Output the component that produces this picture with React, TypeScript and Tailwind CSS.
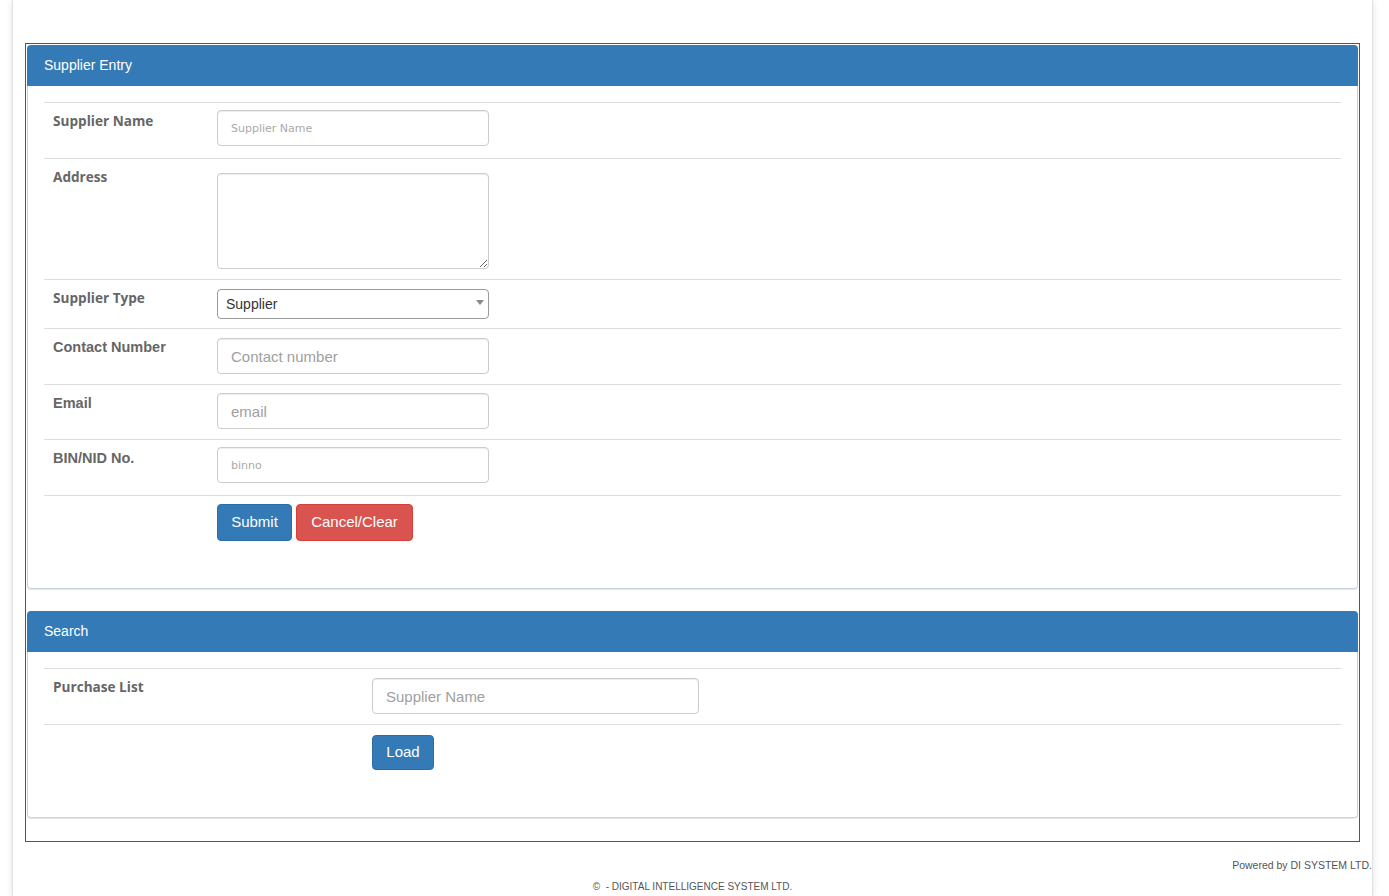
import React from "react";

const arial = { fontFamily: '"Liberation Sans", Arial, sans-serif' };

function Label({ children, variant = "open" }: { children: React.ReactNode; variant?: "open" | "arial" }) {
  return (
    <div
      className={
        variant === "open"
          ? "px-[9px] pt-[8px] text-[13.6px] leading-[20px] font-bold text-[#666] font-['Open_Sans',sans-serif]"
          : "px-[9px] pt-[8px] text-[14.5px] leading-[20px] font-bold text-[#666] font-['Liberation_Sans',Arial,sans-serif]"
      }
    >
      {children}
    </div>
  );
}

const inputBase =
  "block w-[272px] border border-[#ccc] rounded-[4px] bg-white shadow-[inset_0_1px_1px_rgba(0,0,0,0.075)] outline-none";

function Panel({ title, children }: { title: string; children: React.ReactNode }) {
  return (
    <div className="rounded-[4px] shadow-[0_1px_1px_rgba(0,0,0,0.1)]">
      <div className="h-[41px] bg-[#337ab7] rounded-t-[4px] px-[17px] flex items-center text-white text-[14px]" style={arial}>
        {title}
      </div>
      {children}
    </div>
  );
}

export default function App() {
  return (
    <div className="min-h-screen bg-white" style={arial}>
      <div className="min-h-screen ml-[12px] w-[1361px] bg-white border-x border-[#e2e2e2] shadow-[0_0_6px_rgba(0,0,0,0.12)] px-[12px] pt-[43px] pb-[2px]">
        {/* Red frame */}
        <div className="border border-[#c1272d] p-px">
          {/* Supplier Entry */}
          <Panel title="Supplier Entry">
            <div className="border-x border-b border-[#c9d1da] rounded-b-[4px] px-[16px] pt-[16px] pb-[47px]">
              <div className="grid grid-cols-[165px_1fr] border-t border-[#ddd]">
                <Label>Supplier Name</Label>
                <div className="px-[8px] pt-[7px] pb-[12px]">
                  <input
                    placeholder="Supplier Name"
                    className={`${inputBase} h-[36px] px-[13px] text-[11px] text-[#333] placeholder:text-[#aaa] font-['DejaVu_Sans',sans-serif]`}
                  />
                </div>
              </div>
              <div className="grid grid-cols-[165px_1fr] border-t border-[#ddd]">
                <Label>Address</Label>
                <div className="px-[8px] pt-[14px] pb-[10px]">
                  <textarea className={`${inputBase} h-[96px] px-[12px] py-[6px] text-[14px] resize`} style={arial} />
                </div>
              </div>
              <div className="grid grid-cols-[165px_1fr] border-t border-[#ddd]">
                <Label>Supplier Type</Label>
                <div className="px-[8px] pt-[9px] pb-[9px]">
                  <div className="relative w-[272px]">
                    <select
                      defaultValue="Supplier"
                      className="block w-[272px] h-[30px] appearance-none border border-[#9a9a9a] rounded-[4px] bg-white pl-[8px] text-[14px] text-[#333] outline-none"
                      style={arial}
                    >
                      <option>Supplier</option>
                      <option>Customer</option>
                    </select>
                    <span className="pointer-events-none absolute right-[5px] top-[11px] w-0 h-0 border-l-[4px] border-r-[4px] border-t-[5px] border-l-transparent border-r-transparent border-t-[#888]" />
                  </div>
                </div>
              </div>
              <div className="grid grid-cols-[165px_1fr] border-t border-[#ddd]">
                <Label variant="arial">Contact Number</Label>
                <div className="px-[8px] pt-[9px] pb-[10px]">
                  <input
                    placeholder="Contact number"
                    className={`${inputBase} h-[36px] px-[13px] text-[15px] text-[#333] placeholder:text-[#a0a0a0]`}
                    style={arial}
                  />
                </div>
              </div>
              <div className="grid grid-cols-[165px_1fr] border-t border-[#ddd]">
                <Label variant="arial">Email</Label>
                <div className="px-[8px] pt-[8px] pb-[10px]">
                  <input
                    placeholder="email"
                    className={`${inputBase} h-[36px] px-[13px] text-[15px] text-[#333] placeholder:text-[#a0a0a0]`}
                    style={arial}
                  />
                </div>
              </div>
              <div className="grid grid-cols-[165px_1fr] border-t border-[#ddd]">
                <Label variant="arial">BIN/NID No.</Label>
                <div className="px-[8px] pt-[7px] pb-[12px]">
                  <input
                    placeholder="binno"
                    className={`${inputBase} h-[36px] px-[13px] text-[11px] text-[#333] placeholder:text-[#aaa] font-['DejaVu_Sans',sans-serif]`}
                  />
                </div>
              </div>
              <div className="grid grid-cols-[165px_1fr] border-t border-[#ddd]">
                <div />
                <div className="px-[8px] pt-[8px] flex gap-[4px]">
                  <button className="w-[75px] h-[37px] rounded-[4px] bg-[#337ab7] border border-[#2e6da4] text-white text-[15px]" style={arial}>
                    Submit
                  </button>
                  <button className="w-[117px] h-[37px] rounded-[4px] bg-[#d9534f] border border-[#d43f3a] text-white text-[15px]" style={arial}>
                    Cancel/Clear
                  </button>
                </div>
              </div>
            </div>
          </Panel>

          <div className="h-[22px]" />

          {/* Search */}
          <Panel title="Search">
            <div className="border-x border-b border-[#c9d1da] rounded-b-[4px] px-[16px] pt-[16px] pb-[47px]">
              <div className="grid grid-cols-[320px_1fr] border-t border-[#ddd]">
                <Label>Purchase List</Label>
                <div className="px-[8px] pt-[9px] pb-[10px]">
                  <input
                    placeholder="Supplier Name"
                    className={`${inputBase} w-[327px] h-[36px] px-[13px] text-[15px] text-[#333] placeholder:text-[#a0a0a0]`}
                    style={arial}
                  />
                </div>
              </div>
              <div className="grid grid-cols-[320px_1fr] border-t border-[#ddd]">
                <div />
                <div className="px-[8px] pt-[10px]">
                  <button className="w-[62px] h-[35px] rounded-[4px] bg-[#337ab7] border border-[#2e6da4] text-white text-[15px]" style={arial}>
                    Load
                  </button>
                </div>
              </div>
            </div>
          </Panel>

          <div className="h-[22px]" />
        </div>

        {/* Footer */}
        <div className="mt-[15px] -mr-[12px] text-right text-[10.5px] leading-[16px] text-[#555]" style={arial}>
          Powered by DI SYSTEM LTD.
        </div>
        <div className="mt-[6px] text-center text-[10px] leading-[16px] text-[#555]" style={arial}>
          ©&nbsp; - DIGITAL INTELLIGENCE SYSTEM LTD.
        </div>
      </div>
    </div>
  );
}
